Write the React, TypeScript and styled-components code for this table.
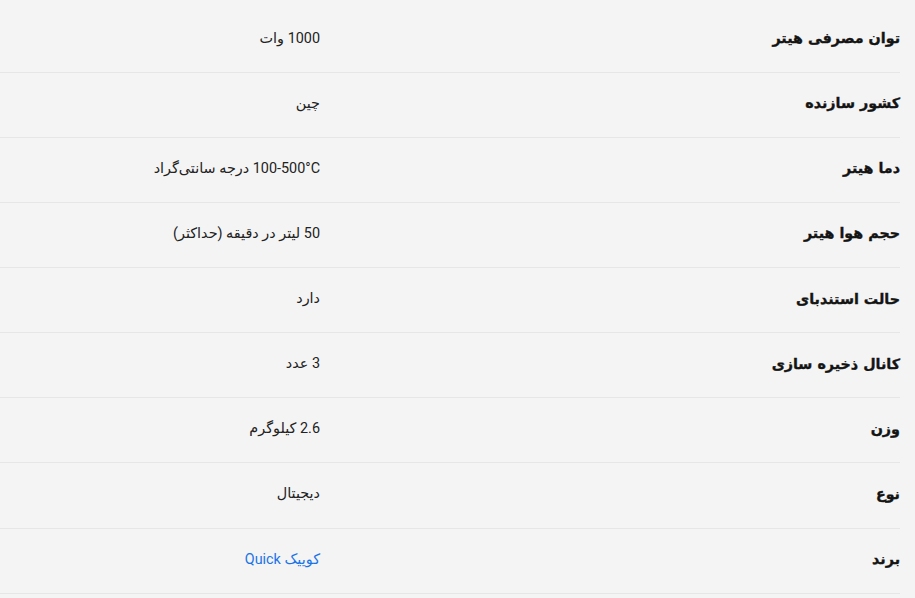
import React from "react";
import styled, { createGlobalStyle } from "styled-components";

const Global = createGlobalStyle`
  html, body { margin: 0; padding: 0; background: #f4f4f4; }
  body { font-family: Roboto, "DejaVu Sans", sans-serif; }
`;

const Table = styled.div`
  direction: rtl;
  width: 900px;
  padding-top: 7.5px;
`;

const Row = styled.div`
  display: grid;
  grid-template-columns: 580px 1fr;
  align-items: center;
  height: 65.125px;
  box-sizing: border-box;
  border-bottom: 1px solid #e6e6e6;
`;

const Label = styled.div`
  font-family: "DejaVu Sans", sans-serif;
  font-weight: bold;
  font-size: 14.3px;
  color: #141414;
  -webkit-text-stroke: 0.35px #141414;
  padding-bottom: 3px;
`;

const Value = styled.div<{ $link?: boolean }>`
  font-family: Roboto, "DejaVu Sans", sans-serif;
  font-size: 14.4px;
  color: ${(p) => (p.$link ? "#1a73e8" : "#222")};
  padding-bottom: 3px;
`;

const rows: { label: string; value: string; link?: boolean }[] = [
  { label: "توان مصرفی هیتر", value: "1000 وات" },
  { label: "کشور سازنده", value: "چین" },
  { label: "دما هیتر", value: "100-500°C درجه سانتی‌گراد" },
  { label: "حجم هوا هیتر", value: "50 لیتر در دقیقه (حداکثر)" },
  { label: "حالت استندبای", value: "دارد" },
  { label: "کانال ذخیره سازی", value: "3 عدد" },
  { label: "وزن", value: "2.6 کیلوگرم" },
  { label: "نوع", value: "دیجیتال" },
  { label: "برند", value: "کوییک Quick", link: true },
];

export default function App() {
  return (
    <>
      <Global />
      <Table>
        {rows.map((r) => (
          <Row key={r.label}>
            <Label>{r.label}</Label>
            <Value $link={r.link}>{r.value}</Value>
          </Row>
        ))}
      </Table>
    </>
  );
}
